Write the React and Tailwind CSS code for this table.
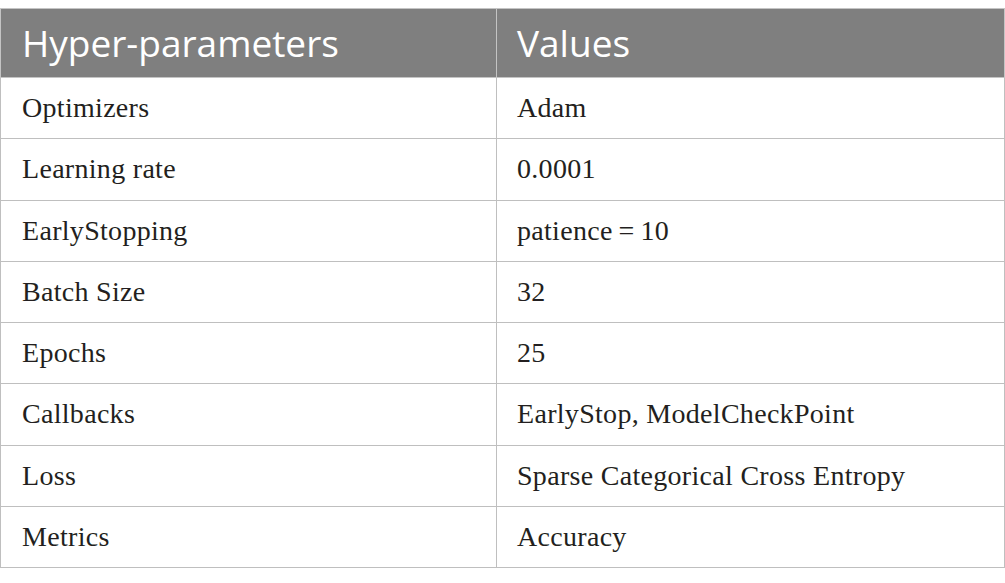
const ROWS = [
  ['Optimizers', 'Adam'],
  ['Learning rate', '0.0001'],
  ['EarlyStopping', 'patience\u2009=\u200910'],
  ['Batch Size', '32'],
  ['Epochs', '25'],
  ['Callbacks', 'EarlyStop, ModelCheckPoint'],
  ['Loss', 'Sparse Categorical Cross Entropy'],
  ['Metrics', 'Accuracy'],
];

export default function App() {
  return (
    <div className="bg-white w-[1005px] h-[583px] pt-2">
      <table className="w-[1005px] border-collapse table-fixed">
        <colgroup>
          <col className="w-[496px]" />
          <col />
        </colgroup>
        <thead>
          <tr className="h-[69px] bg-[#7f7f7f]">
            <th className="border border-[#c4c4c4] text-left font-normal text-white text-[37px] pl-[21px] font-['Open_Sans',sans-serif]">
              Hyper-parameters
            </th>
            <th className="border border-[#c4c4c4] text-left font-normal text-white text-[37px] pl-[20px] font-['Open_Sans',sans-serif]">
              Values
            </th>
          </tr>
        </thead>
        <tbody className="font-['Liberation_Serif',serif] text-[28px] text-[#231f20]">
          {ROWS.map(([k, v]) => (
            <tr key={k} className="h-[61.25px]">
              <td className="border border-[#bfbfbf] pl-[21px] tracking-[0.3px]">{k}</td>
              <td className="border border-[#bfbfbf] pl-[20px] tracking-[0.3px]">{v}</td>
            </tr>
          ))}
        </tbody>
      </table>
    </div>
  );
}
